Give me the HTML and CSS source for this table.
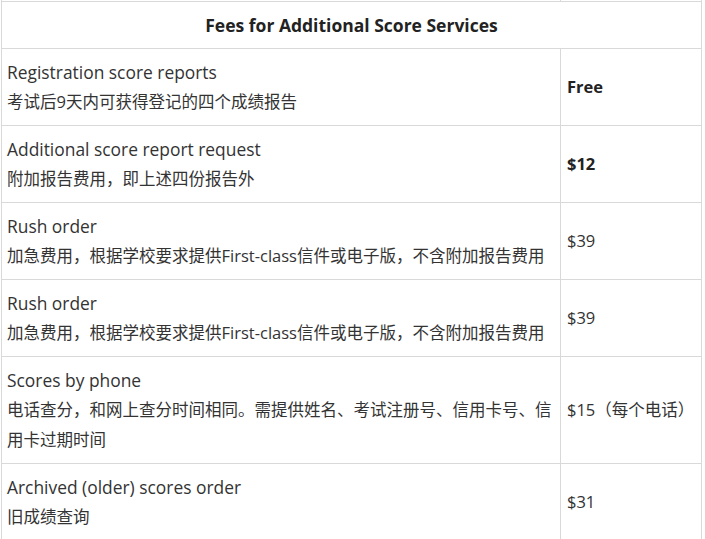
FILE: index.html
```html
<!DOCTYPE html>
<html lang="zh-CN">
<head>
<meta charset="utf-8">
<title>Fees for Additional Score Services</title>
<link rel="stylesheet" href="styles.css">
</head>
<body>
<table class="fees">
  <colgroup>
    <col class="col-svc">
    <col class="col-fee">
  </colgroup>
  <tbody>
    <tr class="cut"><td></td><td></td></tr>
    <tr><th colspan="2" class="title">Fees for Additional Score Services</th></tr>
    <tr>
      <td class="svc"><div class="en">Registration score reports</div><div class="zh">考试后9天内可获得登记的四个成绩报告</div></td>
      <td class="fee strong">Free</td>
    </tr>
    <tr>
      <td class="svc"><div class="en">Additional score report request</div><div class="zh">附加报告费用，即上述四份报告外</div></td>
      <td class="fee strong">$12</td>
    </tr>
    <tr>
      <td class="svc"><div class="en">Rush order</div><div class="zh">加急费用，根据学校要求提供First-class信件或电子版，不含附加报告费用</div></td>
      <td class="fee">$39</td>
    </tr>
    <tr>
      <td class="svc"><div class="en">Rush order</div><div class="zh">加急费用，根据学校要求提供First-class信件或电子版，不含附加报告费用</div></td>
      <td class="fee">$39</td>
    </tr>
    <tr>
      <td class="svc"><div class="en">Scores by phone</div><div class="zh">电话查分，和网上查分时间相同。需提供姓名、考试注册号、信用卡号、信用卡过期时间</div></td>
      <td class="fee">$15（每个电话）</td>
    </tr>
    <tr>
      <td class="svc"><div class="en">Archived (older) scores order</div><div class="zh">旧成绩查询</div></td>
      <td class="fee">$31</td>
    </tr>
  </tbody>
</table>
</body>
</html>
```

FILE: styles.css
```css
html, body {
  margin: 0;
  padding: 0;
  background: #ffffff;
}

body {
  font-family: "Open Sans", "Noto Sans CJK SC", sans-serif;
  font-size: 16px;
  color: #333333;
  overflow: hidden;
}

.fees {
  border-collapse: collapse;
  table-layout: fixed;
  width: 700px;
  margin: -20px 0 0 1px;
}

.col-svc { width: 559px; }
.col-fee { width: 141px; }

.fees td,
.fees th {
  border: 1px solid #d9d9d9;
  padding: 8px 5px;
  line-height: 30px;
  vertical-align: middle;
  text-align: left;
}

.cut td {
  height: 20px;
  padding: 0;
}

.title {
  text-align: center !important;
  font-weight: 700;
  font-size: 17.5px;
  color: #222222;
}

.en {
  font-size: 17.4px;
}

.zh {
  font-size: 16.5px;
}

.fee {
  padding-left: 6px !important;
  font-size: 16.5px;
}

.strong {
  font-weight: 700;
  color: #222222;
}
```
